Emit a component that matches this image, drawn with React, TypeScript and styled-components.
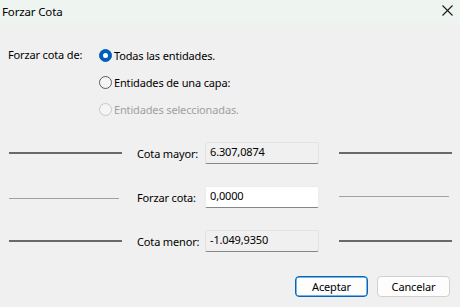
import styled, { createGlobalStyle } from "styled-components";

const GlobalStyle = createGlobalStyle`
  html, body {
    margin: 0;
    padding: 0;
    background: #f0f0f0;
  }
  body {
    font-family: "Noto Sans", "Liberation Sans", sans-serif;
    font-size: 11px;
    letter-spacing: -0.15px;
    color: #000;
  }
`;

const Window = styled.div`
  width: 460px;
  height: 307px;
  display: flex;
  flex-direction: column;
  background: #f0f0f0;
  overflow: hidden;
`;

const TitleBar = styled.div`
  height: 23px;
  flex: none;
  display: flex;
  align-items: center;
  justify-content: space-between;
  padding: 0 7px 0 2px;
  background: #eef4f0;
  font-size: 11.5px;
`;

const CloseButton = styled.div`
  width: 12px;
  height: 12px;
  display: flex;
  align-items: center;
  justify-content: center;
  margin-top: -2px;
`;

const Content = styled.div`
  display: flex;
  flex-direction: column;
  padding-top: 24px;
`;

const SourceSection = styled.div`
  display: flex;
  padding-left: 8px;
`;

const SourceLabel = styled.div`
  width: 91px;
  line-height: 16px;
`;

const Options = styled.div`
  display: flex;
  flex-direction: column;
  gap: 11px;
`;

const Option = styled.div<{ $disabled?: boolean }>`
  display: flex;
  align-items: center;
  height: 16px;
  gap: 2px;
  color: ${(p) => (p.$disabled ? "#a0a0a0" : "#000")};
`;

const RadioDot = styled.span<{ $checked?: boolean; $disabled?: boolean }>`
  box-sizing: border-box;
  width: 13px;
  height: 13px;
  border-radius: 50%;
  flex: none;
  display: flex;
  align-items: center;
  justify-content: center;
  background: ${(p) => (p.$checked ? "#005fb8" : "#f5f5f5")};
  border: 1px solid
    ${(p) => (p.$checked ? "#005fb8" : p.$disabled ? "#c8c8c8" : "#5c5c5c")};
  &::after {
    content: "";
    display: ${(p) => (p.$checked ? "block" : "none")};
    width: 5px;
    height: 5px;
    border-radius: 50%;
    background: #fff;
  }
`;

const Rows = styled.div`
  display: flex;
  flex-direction: column;
  gap: 22px;
  margin-top: 25px;
  padding: 0 8px 0 9px;
`;

const Row = styled.div`
  display: grid;
  grid-template-columns: 113px 217px 113px;
  align-items: center;
  height: 22px;
`;

const Line = styled.div<{ $thin?: boolean; $shift?: number }>`
  height: ${(p) => (p.$thin ? 1 : 2)}px;
  width: ${(p) => (p.$thin ? 110 : 113)}px;
  background: ${(p) => (p.$thin ? "#a0a0a0" : "#696969")};
  transform: translateY(${(p) => p.$shift ?? 0}px);
`;

const Field = styled.div`
  display: flex;
  align-items: center;
  padding-left: 15px;
`;

const FieldLabel = styled.div`
  width: 60px;
  margin-right: 8px;
  white-space: nowrap;
`;

const Input = styled.div<{ $readOnly?: boolean }>`
  box-sizing: border-box;
  width: 114px;
  height: 22px;
  padding: 0 4px;
  display: flex;
  align-items: center;
  padding-bottom: 3px;
  border: 1px solid ${(p) => (p.$readOnly ? "#e2e2e2" : "#ececec")};
  border-bottom: 1px solid #868686;
  border-radius: 2px;
  background: ${(p) => (p.$readOnly ? "#f0f0f0" : "#ffffff")};
`;

const Buttons = styled.div`
  display: flex;
  justify-content: flex-end;
  gap: 9px;
  margin-top: 24px;
  padding-right: 10px;
`;

const Button = styled.div<{ $primary?: boolean }>`
  box-sizing: border-box;
  width: 73px;
  height: 21px;
  display: flex;
  align-items: center;
  justify-content: center;
  border-radius: 4px;
  background: #fdfdfd;
  border: 1px solid ${(p) => (p.$primary ? "#0067c0" : "#d0d0d0")};
  box-shadow: ${(p) => (p.$primary ? "inset 0 0 0 0.5px #0067c0" : "none")};
`;

export default function App() {
  return (
    <Window>
      <GlobalStyle />
      <TitleBar>
        <span>Forzar Cota</span>
        <CloseButton>
          <svg width="11" height="11" viewBox="0 0 11 11">
            <path d="M0.5 0.5 L10.5 10.5 M10.5 0.5 L0.5 10.5" stroke="#1a1a1a" strokeWidth="1.1" />
          </svg>
        </CloseButton>
      </TitleBar>
      <Content>
        <SourceSection>
          <SourceLabel>Forzar cota de:</SourceLabel>
          <Options>
            <Option>
              <RadioDot $checked />
              Todas las entidades.
            </Option>
            <Option>
              <RadioDot />
              Entidades de una capa:
            </Option>
            <Option $disabled>
              <RadioDot $disabled />
              Entidades seleccionadas.
            </Option>
          </Options>
        </SourceSection>
        <Rows>
          <Row>
            <Line />
            <Field>
              <FieldLabel>Cota mayor:</FieldLabel>
              <Input $readOnly>6.307,0874</Input>
            </Field>
            <Line />
          </Row>
          <Row>
            <Line $thin $shift={1} />
            <Field>
              <FieldLabel>Forzar cota:</FieldLabel>
              <Input>0,0000</Input>
            </Field>
            <Line $thin $shift={-1} />
          </Row>
          <Row>
            <Line />
            <Field>
              <FieldLabel>Cota menor:</FieldLabel>
              <Input $readOnly>-1.049,9350</Input>
            </Field>
            <Line />
          </Row>
        </Rows>
        <Buttons>
          <Button $primary>Aceptar</Button>
          <Button>Cancelar</Button>
        </Buttons>
      </Content>
    </Window>
  );
}
